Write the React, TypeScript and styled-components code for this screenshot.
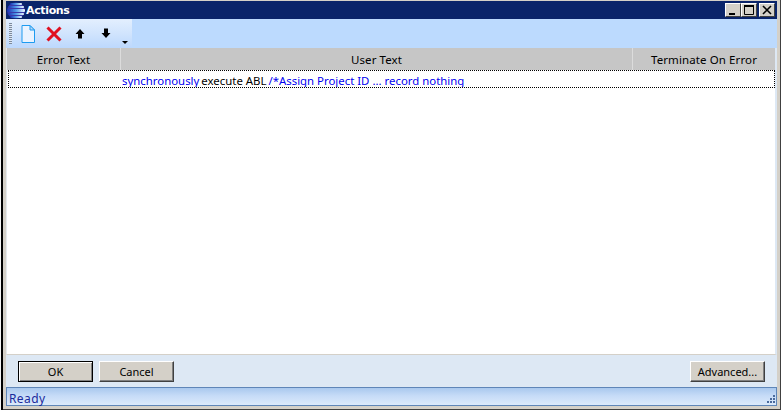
import React from "react";
import styled, { createGlobalStyle } from "styled-components";

const Global = createGlobalStyle`
  html, body { margin: 0; padding: 0; background: #d4d0c8; }
  * { box-sizing: border-box; }
`;

const Window = styled.div`
  width: 781px;
  height: 410px;
  display: flex;
  flex-direction: column;
  padding: 1px 4px 4px 6px;
  background: #d4d0c8;
  box-shadow: inset 1px 0 0 #f4f4f4, inset 3px 0 0 #000, inset -1px 0 0 #404040, inset 0 -1px 0 #404040;
  font-family: "Noto Sans", "DejaVu Sans", sans-serif;
  font-size: 11px;
  overflow: hidden;
`;

const TitleBar = styled.div`
  height: 18px;
  flex: none;
  background: #0a246a;
  display: flex;
  align-items: center;
  color: #fff;
  font: bold 11px "DejaVu Sans", sans-serif;
  letter-spacing: -0.35px;
  padding: 0 2px 0 1px;
`;

const TitleText = styled.span`
  flex: 1;
  margin-left: 1px;
`;

const WinBtn = styled.div<{ $gap?: boolean }>`
  width: 16px;
  height: 14px;
  margin-left: ${(p) => (p.$gap ? "2px" : "0")};
  background: #d4d0c8;
  border: 1px solid;
  border-color: #fff #404040 #404040 #fff;
  display: flex;
  align-items: center;
  justify-content: center;
`;

const Toolbar = styled.div`
  height: 29px;
  flex: none;
  background: #bcdafe;
  display: flex;
  align-items: stretch;
`;

const ToolStrip = styled.div`
  width: 126px;
  background: linear-gradient(180deg, #e3effe 0%, #cfe3fd 55%, #bcd8fd 100%);
  display: flex;
  align-items: center;
  padding-left: 3px;
`;

const Grip = styled.div`
  width: 3px;
  height: 21px;
  margin-right: 3px;
  background: repeating-linear-gradient(180deg, #7b8a9c 0 1px, #dfe8f4 1px 2px);
`;

const ToolIcon = styled.div`
  width: 26px;
  height: 24px;
  display: flex;
  align-items: center;
  justify-content: center;
`;

const Caret = styled.svg`
  margin: 12px 0 0 3px;
`;

const Table = styled.div`
  flex: 1;
  background: #fff;
  display: flex;
  flex-direction: column;
  border-left: 1px solid #e4e8ec;
  border-right: 2px solid #dde8f4;
  border-bottom: 1px solid #d4d0c8;
  min-height: 0;
`;

const HeadRow = styled.div`
  height: 22px;
  flex: none;
  display: grid;
  grid-template-columns: 113px 1fr 143px;
  background: #c6c6c6;
`;

const HeadCell = styled.div`
  display: flex;
  align-items: center;
  justify-content: center;
  color: #000;
  font-size: 11.5px;
  letter-spacing: 0.1px;
  padding-top: 1px;
  & + & { border-left: 1px solid #dcdcdc; }
`;

const DataRow = styled.div`
  height: 18px;
  flex: none;
  margin-left: 1px;
  border: 1px dotted #000;
  display: flex;
  align-items: center;
  padding: 2px 0 0 113px;
  white-space: nowrap;
  font-size: 11.4px;
  color: #000;
  overflow: hidden;
`;

const Phrase = styled.span<{ $link?: boolean }>`
  color: ${(p) => (p.$link ? "#0000f0" : "#000")};
  margin-right: 2px;
`;

const Footer = styled.div`
  height: 32px;
  flex: none;
  background: #dde8f4;
  display: flex;
  align-items: flex-start;
  padding: 6px 12px 0 12px;
  gap: 6px;
`;

const Button = styled.button<{ $default?: boolean; $push?: boolean }>`
  width: 75px;
  height: 21px;
  padding: 0;
  margin-left: ${(p) => (p.$push ? "auto" : "0")};
  background: #d4d0c8;
  color: #000;
  font: 11px "Noto Sans", sans-serif;
  border: 1px solid;
  border-color: ${(p) => (p.$default ? "#000" : "#fff #404040 #404040 #fff")};
  box-shadow: ${(p) =>
    p.$default ? "inset 1px 1px 0 #fff, inset -1px -1px 0 #808080" : "inset -1px -1px 0 #808080"};
`;

const StatusBar = styled.div`
  height: 19px;
  flex: none;
  border: 1px solid #5f86b8;
  background: linear-gradient(180deg, #a9c8ee 0%, #c6dbf7 45%, #dbe9fb 100%);
  color: #1a2a9c;
  font-size: 12px;
  letter-spacing: 0.4px;
  display: flex;
  align-items: center;
  justify-content: space-between;
  padding: 3px 0 0 2px;
`;

const Gripper = styled.svg`
  align-self: flex-end;
`;

const App: React.FC = () => (
  <Window>
    <Global />
    <TitleBar>
      <svg width="18" height="17" viewBox="0 0 18 17" style={{ flex: "none" }}>
        <defs>
          <linearGradient id="s" x1="0" x2="1" y1="0" y2="0">
            <stop offset="0" stopColor="#1a2cb0" />
            <stop offset="0.5" stopColor="#4f9ae8" />
            <stop offset="1" stopColor="#f2f8ff" />
          </linearGradient>
        </defs>
        <ellipse cx="9" cy="8.5" rx="9" ry="8" fill="#3a3aa8" />
        <rect x="3" y="1" width="12" height="2" rx="1" fill="url(#s)" />
        <rect x="1" y="4" width="16" height="2" rx="1" fill="url(#s)" />
        <rect x="0" y="7" width="18" height="3" rx="1" fill="url(#s)" />
        <rect x="1" y="11" width="16" height="2" rx="1" fill="url(#s)" />
        <rect x="3" y="14" width="12" height="2" rx="1" fill="url(#s)" />
      </svg>
      <TitleText>Actions</TitleText>
      <WinBtn>
        <svg width="10" height="10" viewBox="0 0 10 10"><rect x="1" y="8" width="6" height="2" fill="#000" /></svg>
      </WinBtn>
      <WinBtn>
        <svg width="10" height="10" viewBox="0 0 10 10"><path d="M.5 1.5h9v8h-9z" fill="none" stroke="#000" /><rect width="10" height="2" fill="#000" /></svg>
      </WinBtn>
      <WinBtn $gap>
        <svg width="10" height="10" viewBox="0 0 10 10"><path d="M1 1l8 8M9 1l-8 8" stroke="#000" strokeWidth="1.6" /></svg>
      </WinBtn>
    </TitleBar>
    <Toolbar>
      <ToolStrip>
        <Grip />
        <ToolIcon>
          <svg width="14" height="18" viewBox="0 0 14 18">
            <path d="M1 .5h8l4.5 4.5v12.5H1z" fill="#eaf3ff" stroke="#1d9bf0" />
            <path d="M9 .5V5h4.5z" fill="#bcd8f6" stroke="#1d9bf0" />
          </svg>
        </ToolIcon>
        <ToolIcon>
          <svg width="16" height="16" viewBox="0 0 16 16"><path d="M1.5 1.5l13 13M14.5 1.5l-13 13" stroke="#e01020" strokeWidth="3" /></svg>
        </ToolIcon>
        <ToolIcon>
          <svg width="10" height="11" viewBox="0 0 10 11"><path d="M5 1L9.5 6H7v4.5H3V6H.5z" fill="#000" /></svg>
        </ToolIcon>
        <ToolIcon>
          <svg width="10" height="11" viewBox="0 0 10 11"><path d="M5 10L9.5 5H7V.5H3V5H.5z" fill="#000" /></svg>
        </ToolIcon>
        <Caret width="6" height="10" viewBox="0 0 6 10"><path d="M0 6h6L3 9z" fill="#000" /></Caret>
      </ToolStrip>
    </Toolbar>
    <Table>
      <HeadRow>
        <HeadCell>Error Text</HeadCell>
        <HeadCell>User Text</HeadCell>
        <HeadCell>Terminate On Error</HeadCell>
      </HeadRow>
      <DataRow>
        <Phrase $link>synchronously</Phrase>
        <Phrase>execute ABL</Phrase>
        <Phrase $link>/*Assign Project ID ... record nothing</Phrase>
      </DataRow>
    </Table>
    <Footer>
      <Button $default>OK</Button>
      <Button>Cancel</Button>
      <Button $push>Advanced...</Button>
    </Footer>
    <StatusBar>
      Ready
      <Gripper width="12" height="12" viewBox="0 0 12 12">
        <path d="M9 2h2v2H9zM6 5h2v2H6zM9 5h2v2H9zM3 8h2v2H3zM6 8h2v2H6zM9 8h2v2H9z" fill="#4a6a9c" />
      </Gripper>
    </StatusBar>
  </Window>
);

export default App;
